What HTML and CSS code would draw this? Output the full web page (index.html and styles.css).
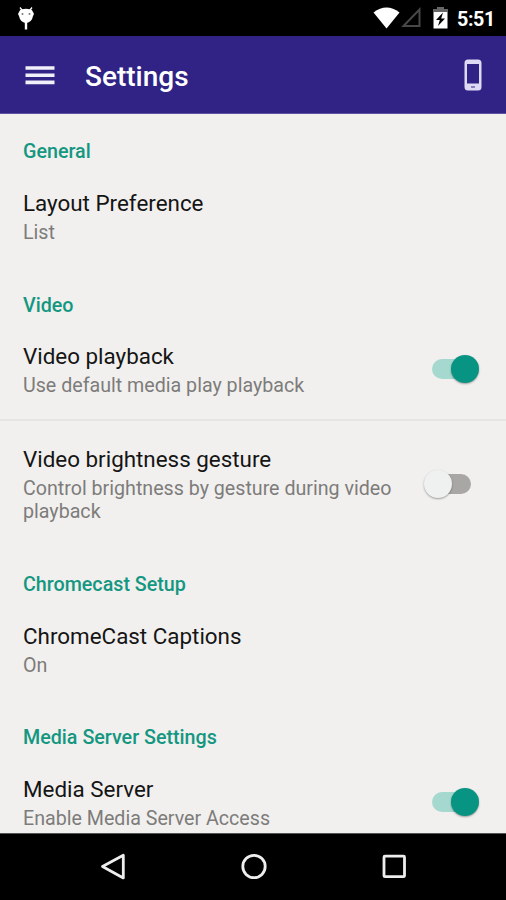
FILE: index.html
```html
<!DOCTYPE html>
<html lang="en">
<head>
    <meta charset="UTF-8">
    <meta name="viewport" content="width=device-width, initial-scale=1.0">
    <title>Settings</title>
    <link rel="stylesheet" href="styles.css">
</head>
<body>
    <div class="screen">
        <div class="status-bar">
            <svg class="debug-icon" width="18" height="24" viewBox="0 0 18 24">
                <path d="M3 1.5L5 4M15 1.5L13 4" stroke="#fff" stroke-width="1.3"/>
                <path d="M2 6Q3 3 5 3.2Q9 2.2 13 3.2Q15 3 16 6L17 8L16 10Q15 16 9 17.200Q3 16 2 10L1 8Z" fill="#fff"/>
                <path d="M9 16V23.500" stroke="#fff" stroke-width="2.4"/>
                <circle cx="5.5" cy="8" r="1" fill="#777"/>
                <circle cx="12.5" cy="8" r="1" fill="#777"/>
            </svg>
            <svg class="wifi-icon" width="27" height="22" viewBox="0 0 27 22">
                <path d="M.5 5.5Q13.500 -4.500 26.500 5.500L13.500 21.500Z" fill="#fff"/>
            </svg>
            <svg class="signal-icon" width="20" height="21" viewBox="0 0 20 21">
                <path d="M2.500 19H18.500V2.500Z" fill="none" stroke="#484848" stroke-width="2"/>
            </svg>
            <svg class="battery-icon" width="15" height="22" viewBox="0 0 15 22">
                <path d="M4 0H11V2H15V5H0V2H4Z" fill="#666"/>
                <path d="M.5 5H14.500V21.500H.5Z" fill="#fff"/>
                <path d="M10 5.500L3 13H6.800L5 19L12 11.500H8.200Z" fill="#000"/>
            </svg>
            <span class="clock">5:51</span>
        </div>

        <header class="toolbar">
            <svg class="menu-icon" width="30" height="20" viewBox="0 0 30 20">
                <path d="M.5 3H29.500M.5 10.200H29.500M.5 17.400H29.500" stroke="#f1effa" stroke-width="3.600"/>
            </svg>
            <h1>Settings</h1>
            <svg class="phone-icon" width="18" height="32" viewBox="0 0 18 32">
                <path fill-rule="evenodd" d="M4 .5H14Q17.500.5 17.500 4V28Q17.500 31.500 14 31.500H4Q.5 31.500.5 28V4Q.5.5 4 .5ZM3 5V24.500H15V5Z" fill="#dedaf5"/>
                <path d="M7 28H11" stroke="#6b62a8" stroke-width="1.500"/>
            </svg>
        </header>

        <main class="settings">
            <h2>General</h2>
            <div class="item">
                <div class="text">
                    <div class="title">Layout Preference</div>
                    <div class="summary">List</div>
                </div>
            </div>

            <h2>Video</h2>
            <div class="item divider">
                <div class="text">
                    <div class="title">Video playback</div>
                    <div class="summary">Use default media play playback</div>
                </div>
                <div class="switch on"></div>
            </div>
            <div class="item">
                <div class="text">
                    <div class="title">Video brightness gesture</div>
                    <div class="summary">Control brightness by gesture during video playback</div>
                </div>
                <div class="switch"></div>
            </div>

            <h2>Chromecast Setup</h2>
            <div class="item">
                <div class="text">
                    <div class="title">ChromeCast Captions</div>
                    <div class="summary">On</div>
                </div>
            </div>

            <h2>Media Server Settings</h2>
            <div class="item">
                <div class="text">
                    <div class="title">Media Server</div>
                    <div class="summary">Enable Media Server Access</div>
                </div>
                <div class="switch on"></div>
            </div>
        </main>

        <nav class="nav-bar">
            <svg width="28" height="28" viewBox="0 0 28 28">
                <path d="M3.500 13.500L24.300 2.300V24.900Z"/>
            </svg>
            <svg width="28" height="28" viewBox="0 0 28 28">
                <circle cx="14" cy="13.500" r="11.200"/>
            </svg>
            <svg width="28" height="28" viewBox="0 0 28 28">
                <rect x="4" y="3.200" width="20.500" height="20.500" rx="1"/>
            </svg>
        </nav>
    </div>
</body>
</html>
```
FILE: styles.css
```css
* {
    box-sizing: border-box;
}
body {
    margin: 0;
    font-family: Roboto, sans-serif;
    background-color: #000;
}
.screen {
    display: flex;
    flex-direction: column;
    height: 900px;
    overflow: hidden;
}
.status-bar {
    display: flex;
    height: 36px;
    padding: 6px 11px 0 17px;
    background-color: #000;
    color: #fff;
}
.wifi-icon {
    margin-left: auto;
    margin-top: 1px;
}
.signal-icon {
    margin-left: 1px;
    margin-top: 1px;
}
.battery-icon {
    margin-left: 12px;
    margin-top: 1px;
}
.clock {
    width: 38px;
    margin-left: 9px;
    margin-top: 2px;
    font-size: 19.7px;
    font-weight: 700;
    line-height: 24px;
    letter-spacing: -0.4px;
    white-space: nowrap;
}
.toolbar {
    display: flex;
    align-items: center;
    height: 78px;
    padding: 0 24px 0 25px;
    background-color: #302385;
    border-bottom: 1px solid #5b519c;
    color: #fff;
}
h1 {
    margin: 5px 0 0 30px;
    font-size: 28px;
    font-weight: 500;
    line-height: 34px;
}
.phone-icon {
    margin-left: auto;
}
.settings {
    flex: 1;
    min-height: 0;
    overflow: hidden;
    background-color: #f1f0ee;
}
h2 {
    height: 51px;
    margin: 0;
    padding: 26px 23px 0;
    font-size: 19.7px;
    font-weight: 500;
    line-height: 23px;
    color: #149781;
}
.item {
    display: flex;
    align-items: center;
    padding: 0 23px;
}
.item.divider {
    border-bottom: 2px solid #e6e5e3;
}
.text {
    flex: 1;
    padding: 25px 0 23.5px;
}
.item.divider .text {
    padding-top: 24px;
    padding-bottom: 22.5px;
}
.title {
    font-size: 22.4px;
    line-height: 26.5px;
    color: #151515;
}
.summary {
    max-width: 380px;
    margin-top: 4.5px;
    font-size: 19.65px;
    line-height: 23px;
    color: #7d7c7b;
}
.switch {
    position: relative;
    width: 60px;
    height: 30px;
}
.switch::before {
    content: "";
    position: absolute;
    left: 9px;
    top: 5px;
    width: 39px;
    height: 20px;
    border-radius: 10px;
    background-color: #a8a7a6;
}
.switch::after {
    content: "";
    position: absolute;
    left: 1px;
    top: 1px;
    width: 28px;
    height: 28px;
    border-radius: 50%;
    background-color: #eff1f1;
    box-shadow: 0 1px 2px rgba(0,0,0,0.35);
}
.switch.on::before {
    background-color: #a5d8ce;
}
.switch.on::after {
    left: 28px;
    background-color: #089482;
}
.nav-bar {
    display: flex;
    justify-content: space-between;
    height: 67px;
    padding: 19px 98px 0 99px;
    border-top: 1px solid #555;
    background-color: #000;
}
.nav-bar svg {
    fill: none;
    stroke: #eee;
    stroke-width: 2.8;
    stroke-linejoin: round;
}
```
